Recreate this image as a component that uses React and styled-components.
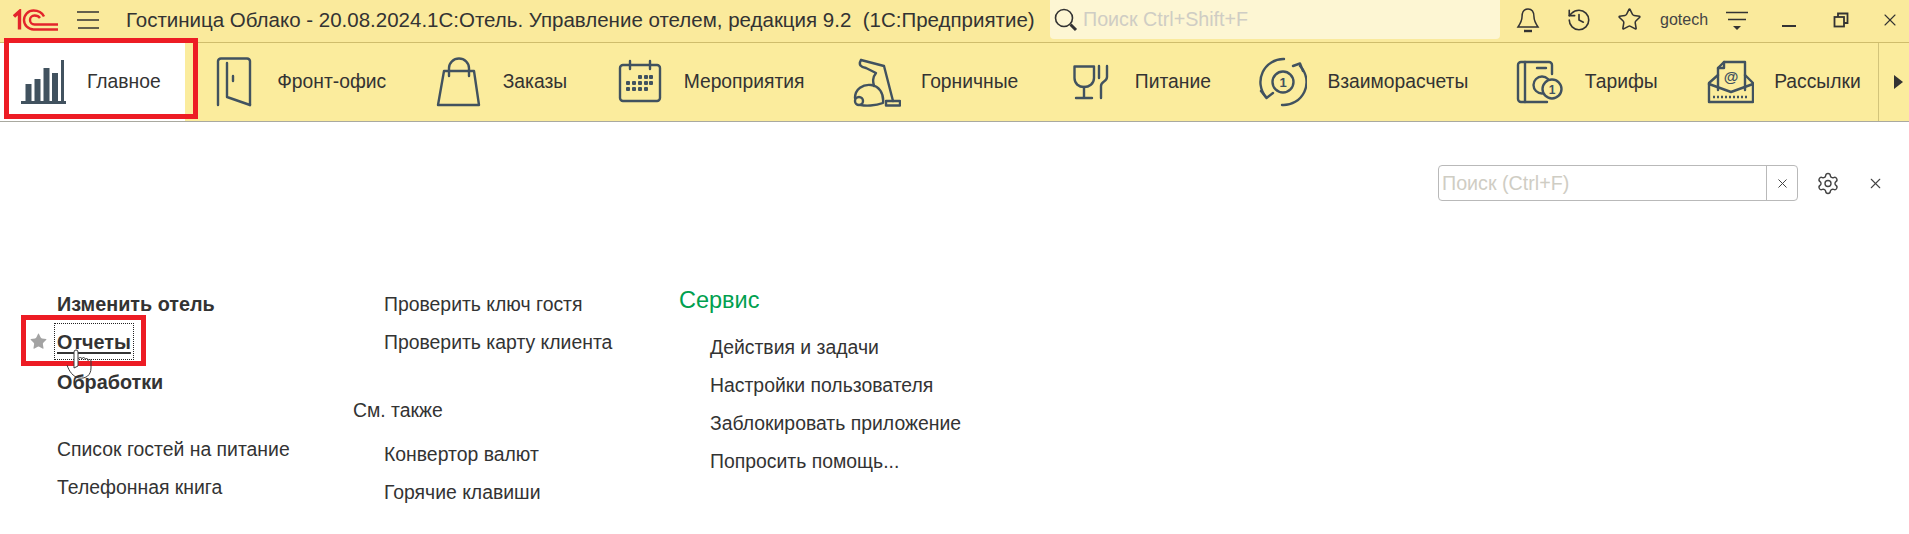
import React from 'react';
import styled, { createGlobalStyle } from 'styled-components';
import { History, Star, Settings, X } from 'lucide-react';

const GlobalStyle = createGlobalStyle`
  html, body {
    margin: 0;
    padding: 0;
    background: #fff;
  }
  body {
    font-family: "Liberation Sans", Arial, sans-serif;
    color: #333;
  }
`;

const Page = styled.div`
  width: 1909px;
  height: 534px;
  overflow: hidden;
  position: relative;
  background: #fff;
`;

const Header = styled.header`
  height: 42px;
  display: flex;
  align-items: flex-start;
  background: #faea9c;
  border-bottom: 1px solid #cfbd6c;
`;

const LogoBox = styled.div`
  width: 77px;
  height: 39px;
  padding-left: 13px;
  box-sizing: border-box;
  display: flex;
  align-items: center;
`;

const Burger = styled.div`
  width: 49px;
  height: 39px;
  display: flex;
  align-items: center;
`;

const Title = styled.div`
  flex: 1;
  height: 39px;
  line-height: 40px;
  font-size: 20.5px;
  color: #333;
  white-space: pre;
`;

const GlobalSearch = styled.div`
  width: 450px;
  height: 39px;
  box-sizing: border-box;
  padding-left: 4px;
  display: flex;
  align-items: center;
  gap: 5px;
  background: #fdf6d3;
  border-radius: 0 0 4px 4px;
`;

const Placeholder = styled.span`
  font-size: 19.7px;
  color: #cfcdc4;
  white-space: nowrap;
`;

const Tools = styled.div`
  display: flex;
  height: 39px;
  width: 409px;
  padding-left: 3px;
  box-sizing: border-box;
`;

const Slot = styled.div`
  flex: 0 0 ${p => p.$w}px;
  display: flex;
  align-items: center;
  justify-content: center;
  color: #333;
`;

const UserName = styled.span`
  margin-left: 7px;
  width: 47px;
  line-height: 39px;
  font-size: 16px;
  color: #444;
`;

const Nav = styled.nav`
  height: 78px;
  display: flex;
  background: #fbec9d;
  border-bottom: 1px solid #a9a9a0;
`;

const NavTrack = styled.div`
  flex: 1;
  min-width: 0;
  display: flex;
`;

const NavTab = styled.div`
  flex: none;
  position: relative;
  display: flex;
  align-items: center;
  gap: 20.5px;
  padding: 0 24px 0 ${p => (p.$active ? 18.5 : 24)}px;
  background: ${p => (p.$active ? '#fff' : 'transparent')};
  font-size: 19.3px;
  color: #333;
  white-space: nowrap;
`;

const NavIcon = styled.svg`
  flex: none;
  width: 48px;
  height: 50px;
  fill: none;
  stroke: #41525f;
  stroke-width: 2.4;
  stroke-linecap: round;
  stroke-linejoin: round;
`;

const IconDigit = styled.text`
  fill: #41525f;
  stroke: none;
  font-family: "Liberation Sans", Arial, sans-serif;
  font-weight: 700;
  font-size: ${p => p.$size}px;
  text-anchor: middle;
`;

const NavMore = styled.div`
  flex: none;
  width: 31px;
  position: relative;
  z-index: 1;
  box-sizing: border-box;
  padding-left: 15px;
  display: flex;
  align-items: center;
  background: #fbec9d;
  border-left: 1px solid #d3c47a;
`;

const Arrow = styled.span`
  width: 0;
  height: 0;
  border-left: 9px solid #333;
  border-top: 7px solid transparent;
  border-bottom: 7px solid transparent;
`;

const RedFrame = styled.div`
  position: absolute;
  left: ${p => p.$left}px;
  top: ${p => p.$top}px;
  width: ${p => p.$width}px;
  height: ${p => p.$height}px;
  box-sizing: border-box;
  border: 5px solid #ed1c24;
  pointer-events: none;
  z-index: 3;
`;

const Toolbar = styled.div`
  display: flex;
  justify-content: flex-end;
  align-items: center;
  padding: 43px 22px 0 0;
`;

const SearchBox = styled.div`
  width: 360px;
  height: 36px;
  box-sizing: border-box;
  display: flex;
  border: 1px solid #b9b9b9;
  border-radius: 4px;
`;

const SearchField = styled.div`
  flex: 1;
  padding-left: 3px;
  line-height: 34px;
`;

const SearchClear = styled.div`
  width: 30px;
  display: flex;
  align-items: center;
  justify-content: center;
  border-left: 1px solid #b9b9b9;
  color: #444;
`;

const ToolButton = styled.div`
  flex: none;
  width: 24px;
  height: 24px;
  margin-left: ${p => p.$gap}px;
  color: #444;
  display: flex;
  align-items: center;
  justify-content: center;
`;

const Columns = styled.div`
  display: grid;
  grid-template-columns: 296px 326px 1fr;
  padding: 84px 0 0 57px;
`;

const Column = styled.div`
  display: flex;
  flex-direction: column;
`;

const Row = styled.div`
  position: relative;
  height: 38px;
  line-height: 38px;
  font-size: ${p => (p.$bold ? 19.8 : 19.4)}px;
  font-weight: ${p => (p.$bold ? 700 : 400)};
  color: #333;
  white-space: nowrap;
  padding-left: ${p => p.$indent || 0}px;
  margin-top: ${p => p.$gap || 0}px;
`;

const GroupTitle = styled.div`
  height: 43px;
  line-height: 30px;
  font-size: 23.5px;
  color: #00a04f;
`;

const FocusedLink = styled.span`
  position: relative;
  text-decoration: underline;
  text-decoration-thickness: 2px;
  text-underline-offset: 3px;
  &::before {
    content: '';
    position: absolute;
    left: -3px;
    right: -3px;
    top: -8px;
    bottom: -7px;
    border: 1px dotted #222;
  }
`;

const FavStar = styled.span`
  position: absolute;
  left: -28px;
  top: 9px;
  color: #a3a3a3;
  display: flex;
`;

const HandCursor = styled.svg`
  position: absolute;
  left: 6px;
  top: 25px;
  width: 32px;
  height: 32px;
  z-index: 4;
`;

const Logo = () => (
  <svg width="45" height="22" viewBox="0 0 45 22" fill="none" stroke="#e3242b" strokeWidth="2.4">
    <path d="M1 7.5 L6.5 2.5 V20.5" strokeWidth="3.4" />
    <path d="M31 7.5 C29 3.5 25 1.5 20.5 1.5 A9.5 9.5 0 0 0 20.5 20.5 H45" />
    <path d="M27 9 C26 7.5 24 6.5 21.5 6.5 A4.5 4.5 0 0 0 21.5 15.5 H45" />
  </svg>
);

const BurgerIcon = () => (
  <svg width="23" height="20" viewBox="0 0 23 20" stroke="#333" strokeWidth="1.4">
    <path d="M0 2 H22 M0 10 H22 M1 18 H22" />
  </svg>
);

const SearchIcon = () => (
  <svg width="24" height="24" viewBox="0 0 24 24" fill="none" stroke="#333">
    <circle cx="10" cy="10" r="8.5" strokeWidth="1.6" />
    <path d="M16.5 16.5 L22 22" strokeWidth="3" />
  </svg>
);

const BellIcon = () => (
  <svg width="24" height="26" viewBox="0 0 24 26" fill="none" stroke="#333" strokeWidth="1.5">
    <path d="M12 2 C7.5 2 6 6 6 10 C6 14 4 17 2 20 H22 C20 17 18 14 18 10 C18 6 16.5 2 12 2 Z" />
    <path d="M8 24 H16" strokeWidth="2.4" />
  </svg>
);

const FilterIcon = () => (
  <svg width="24" height="24" viewBox="0 0 24 24" stroke="#333" fill="#333">
    <path d="M1 4.5 H23 M3 11.5 H21" strokeWidth="1.4" />
    <path d="M8 18 H16 L12 22 Z" stroke="none" />
  </svg>
);

const MinimizeIcon = () => (
  <svg width="16" height="24" viewBox="0 0 16 24" fill="#333">
    <rect x="1" y="17" width="14" height="2" />
  </svg>
);

const RestoreIcon = () => (
  <svg width="16" height="16" viewBox="0 0 16 16" fill="none" stroke="#333" strokeWidth="1.8">
    <rect x="1.5" y="5" width="9.5" height="9.5" />
    <path d="M5 5 V1.5 H14.5 V11 H11" />
  </svg>
);

const ChartIcon = () => (
  <NavIcon viewBox="0 0 48 50">
    <g fill="#41525f" stroke="none">
      <rect x="6.5" y="27" width="6" height="17" />
      <rect x="15.5" y="22" width="6" height="22" />
      <rect x="24.5" y="11" width="6" height="33" />
      <rect x="33" y="16" width="6" height="28" />
      <rect x="42" y="3" width="3" height="41" />
      <rect x="2" y="44" width="45" height="3" />
    </g>
  </NavIcon>
);

const DoorIcon = () => (
  <NavIcon viewBox="0 0 48 50">
    <path d="M9 48 V4 A3 3 0 0 1 12 1.5 H38 A3 3 0 0 1 41 4 V48" />
    <path d="M18 6 V40 L41 48" />
    <path d="M24 19 V24" />
  </NavIcon>
);

const BagIcon = () => (
  <NavIcon viewBox="0 0 48 50">
    <path d="M10 14 H40 L45 48 H4 Z" />
    <path d="M15 19 V11 A10 9.5 0 0 1 35 11 V19" />
  </NavIcon>
);

const calendarDots = [
  [25, 20], [31, 20], [36, 20],
  [13, 26], [19, 26], [25, 26], [31, 26], [36, 26],
  [13, 32], [19, 32], [25, 32], [31, 32],
];

const CalendarIcon = () => (
  <NavIcon viewBox="0 0 48 50">
    <rect x="5" y="8" width="40" height="36" rx="3" />
    <path d="M15 4 V12 M35 4 V12" />
    <g fill="#41525f" stroke="none">
      {calendarDots.map(([x, y]) => (
        <rect key={`${x}-${y}`} x={x - 2} y={y - 2} width="4" height="4" rx="1" />
      ))}
    </g>
  </NavIcon>
);

const VacuumIcon = () => (
  <NavIcon viewBox="0 0 48 50" strokeWidth="2">
    <path d="M8 3 L31 9 L40 44" />
    <path d="M8 3 C5 8 8 10 13 11 L23 16 C19 21 20 25 21 29" />
    <path d="M2 41 C2 32 10 27 18 28 C26 29 31 36 30 46 C22 49 12 49 8 48" />
    <circle cx="6" cy="44" r="4" />
    <rect x="33" y="44" width="14" height="4.5" />
  </NavIcon>
);

const DiningIcon = () => (
  <NavIcon viewBox="0 0 48 50">
    <path d="M8.5 9.5 H28 V21 C28 27 23 30 18 30 C13 30 8.5 27 8.5 21 Z" />
    <path d="M18 30 V40 M10 41 H26" />
    <path d="M33 9 V21 M41 9 V20 C41 25 35 24 35 29 V41" />
  </NavIcon>
);

const SettlementIcon = () => (
  <NavIcon viewBox="0 0 48 50" strokeWidth="2.8">
    <circle cx="24" cy="25" r="10.5" />
    <IconDigit $size={13} x="24" y="30">1</IconDigit>
    <path d="M25 2 A23 23 0 0 0 7 40" />
    <path d="M2 34 L7.5 41 L14 36" />
    <path d="M23 48 A23 23 0 0 0 41 9" />
    <path d="M34 9 L41 6.5 L44 14" />
  </NavIcon>
);

const TariffIcon = () => (
  <NavIcon viewBox="0 0 48 50">
    <path d="M36 17 V8 A3 3 0 0 0 33 5 H5 A3 3 0 0 0 2 8 V42 A3 3 0 0 0 5 45 H31" />
    <path d="M9 5 V45 M21 11 H30" />
    <circle cx="26" cy="28" r="8.5" />
    <circle cx="36" cy="32" r="9.5" fill="#fbec9d" />
    <IconDigit $size={12} x="36" y="36.5">1</IconDigit>
  </NavIcon>
);

const MailIcon = () => (
  <NavIcon viewBox="0 0 48 50" strokeWidth="2">
    <path d="M12 33 V11 L18 5 H39 V33" />
    <path d="M12 11 H18 V5" />
    <path d="M12 18 L3 26 V45 H47 V26 L39 18" />
    <path d="M3 27 L25 35 L47 27" />
    <path d="M7 40 H43" strokeDasharray="2 2" strokeLinecap="butt" />
    <IconDigit $size={15} x="25" y="25">@</IconDigit>
  </NavIcon>
);

const Cursor = () => (
  <HandCursor viewBox="0 0 32 32" fill="none" stroke="#3b3b3b" strokeWidth="1">
    <path d="M4 17 C6 23 10 29 16 30 C23 31 28 27 28 20 V13 C28 11 25 11 25 13" />
    <path d="M25 12 C25 10 22 10 22 12 M22 11 C22 9 19 9 19 11 M19 11 C19 9 16 9 15 11" />
    <path d="M11 20 V4 A2 2 0 0 1 15 4 V18 Z" fill="#fff" />
  </HandCursor>
);

const navItems = [
  { label: 'Фронт-офис', Icon: DoorIcon },
  { label: 'Заказы', Icon: BagIcon },
  { label: 'Мероприятия', Icon: CalendarIcon },
  { label: 'Горничные', Icon: VacuumIcon },
  { label: 'Питание', Icon: DiningIcon },
  { label: 'Взаиморасчеты', Icon: SettlementIcon },
  { label: 'Тарифы', Icon: TariffIcon },
  { label: 'Рассылки', Icon: MailIcon },
];

export default function App() {
  return (
    <Page>
      <GlobalStyle />
      <Header>
        <LogoBox><Logo /></LogoBox>
        <Burger><BurgerIcon /></Burger>
        <Title>Гостиница Облако - 20.08.2024.1С:Отель. Управление отелем, редакция 9.2  (1С:Предприятие)</Title>
        <GlobalSearch>
          <SearchIcon />
          <Placeholder>Поиск Ctrl+Shift+F</Placeholder>
        </GlobalSearch>
        <Tools>
          <Slot $w={50}><BellIcon /></Slot>
          <Slot $w={52}><History size={26} strokeWidth={1.5} /></Slot>
          <Slot $w={48}><Star size={25} strokeWidth={1.5} /></Slot>
          <UserName>gotech</UserName>
          <Slot $w={60}><FilterIcon /></Slot>
          <Slot $w={44}><MinimizeIcon /></Slot>
          <Slot $w={60}><RestoreIcon /></Slot>
          <Slot $w={37}><X size={20} strokeWidth={1.3} /></Slot>
        </Tools>
      </Header>

      <Nav>
        <NavTrack>
          <NavTab $active>
            <ChartIcon />
            Главное
            <RedFrame $left={4} $top={-5} $width={194} $height={81} />
          </NavTab>
          {navItems.map(({ label, Icon }) => (
            <NavTab key={label}>
              <Icon />
              {label}
            </NavTab>
          ))}
        </NavTrack>
        <NavMore><Arrow /></NavMore>
      </Nav>

      <Toolbar>
        <SearchBox>
          <SearchField><Placeholder>Поиск (Ctrl+F)</Placeholder></SearchField>
          <SearchClear><X size={15} strokeWidth={1.6} /></SearchClear>
        </SearchBox>
        <ToolButton $gap={18}><Settings size={25} strokeWidth={1.4} /></ToolButton>
        <ToolButton $gap={23}><X size={17} strokeWidth={1.5} /></ToolButton>
      </Toolbar>

      <Columns>
        <Column>
          <Row $bold>Изменить отель</Row>
          <Row $bold>
            <FavStar><Star size={19} fill="currentColor" strokeWidth={0} /></FavStar>
            <FocusedLink>Отчеты</FocusedLink>
            <RedFrame $left={-36} $top={-8} $width={125} $height={51} />
            <Cursor />
          </Row>
          <Row $bold $gap={2}>Обработки</Row>
          <Row $gap={29}>Список гостей на питание</Row>
          <Row>Телефонная книга</Row>
        </Column>
        <Column>
          <Row $indent={31}>Проверить ключ гостя</Row>
          <Row $indent={31}>Проверить карту клиента</Row>
          <Row $gap={30}>См. также</Row>
          <Row $indent={31} $gap={6}>Конвертор валют</Row>
          <Row $indent={31}>Горячие клавиши</Row>
        </Column>
        <Column>
          <GroupTitle>Сервис</GroupTitle>
          <Row $indent={31}>Действия и задачи</Row>
          <Row $indent={31}>Настройки пользователя</Row>
          <Row $indent={31}>Заблокировать приложение</Row>
          <Row $indent={31}>Попросить помощь...</Row>
        </Column>
      </Columns>
    </Page>
  );
}
